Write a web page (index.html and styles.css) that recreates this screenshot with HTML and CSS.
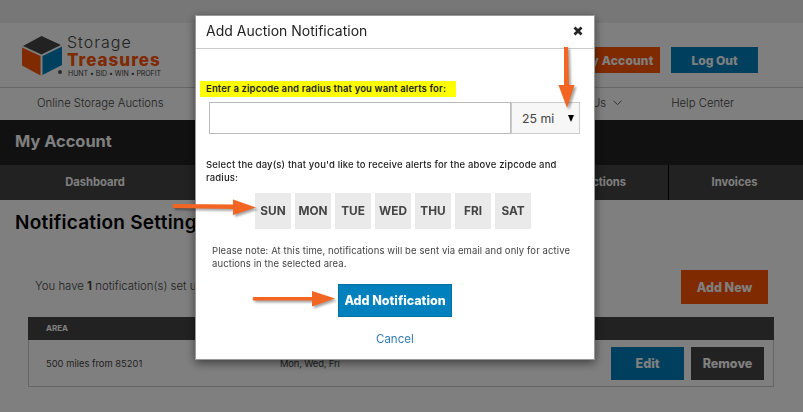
FILE: index.html
```
<!DOCTYPE html>
<html lang="en">
<head>
    <meta charset="UTF-8">
    <meta name="viewport" content="width=device-width, initial-scale=1.0">
    <title>Notification Settings - Storage Treasures</title>
    <link rel="stylesheet" href="styles.css">
</head>
<body>
    <div class="topbar"></div>

    <header class="header">
        <a class="logo" href="#">
            <svg class="logo-cube" width="42" height="42" viewBox="0 0 42 42">
                <path d="M20.5 1 40 10 20.5 19.500 2 11Z" fill="#444"/>
                <path d="M1 12.500 19.500 21V40.500L1 30.500Z" fill="#ff5400"/>
                <path d="M21.500 21 41 11.500V30L21.500 40Z" fill="#0081bd"/>
                <circle cx="39" cy="37" r="2" fill="#555"/>
            </svg>
            <span class="logo-text">
                <span class="logo-storage">Storage</span>
                <span class="logo-treasures">Treasures</span>
                <span class="logo-tagline">HUNT • BID • WIN • PROFIT</span>
            </span>
        </a>
        <div class="header-buttons">
            <a class="btn btn-orange btn-account" href="#">My Account</a>
            <a class="btn btn-blue btn-logout" href="#">Log Out</a>
        </div>
    </header>

    <nav class="main-nav">
        <a class="nav-auctions" href="#">Online Storage Auctions</a>
        <a class="nav-about" href="#">About Us
            <svg width="9" height="6" viewBox="0 0 9 6"><path d="M.5.7 4.500 4.700 8.500.7" fill="none" stroke="#666" stroke-width="1"/></svg>
        </a>
        <a class="nav-help" href="#">Help Center</a>
    </nav>

    <div class="account-bar">My Account</div>

    <nav class="tabs">
        <a class="tab tab-dashboard" href="#">Dashboard</a>
        <a class="tab tab-auctions" href="#">My Auctions</a>
        <a class="tab tab-invoices" href="#">Invoices</a>
    </nav>

    <main class="content">
        <h1>Notification Settings</h1>
        <div class="summary">
            <p>You have <b>1</b> notification(s) set up</p>
            <a class="btn btn-orange btn-new" href="#">Add New</a>
        </div>
        <div class="table">
            <div class="table-head">AREA</div>
            <div class="table-row">
                <span class="cell-area">500 miles from 85201</span>
                <span class="cell-days">Mon, Wed, Fri</span>
                <a class="btn btn-blue btn-row btn-edit" href="#">Edit</a>
                <a class="btn btn-dark btn-row btn-remove" href="#">Remove</a>
            </div>
        </div>
    </main>

    <div class="overlay">
        <div class="modal">
            <div class="modal-header">
                <h2>Add Auction Notification</h2>
                <svg class="close" width="10" height="10" viewBox="0 0 10 10"><path d="M1.500 1.500 8.500 8.500M8.500 1.500 1.500 8.500" stroke="#222" stroke-width="2.800"/></svg>
            </div>
            <div class="modal-body">
                <label class="zip-label" for="zipcode">Enter a zipcode and radius that you want alerts for:</label>
                <div class="zip-row">
                    <input type="text" id="zipcode" name="zipcode">
                    <div class="radius">
                        <span>25 mi</span>
                        <svg width="6" height="7" viewBox="0 0 6 7"><path d="M0 0H6L3 7Z" fill="#000"/></svg>
                    </div>
                </div>
                <p class="days-label"><span class="line">Select the day(s) that you'd like to receive alerts for the above zipcode and</span> <span>radius:</span></p>
                <div class="days">
                    <span class="day">SUN</span>
                    <span class="day">MON</span>
                    <span class="day">TUE</span>
                    <span class="day">WED</span>
                    <span class="day">THU</span>
                    <span class="day">FRI</span>
                    <span class="day">SAT</span>
                </div>
                <p class="note"><span class="line">Please note: At this time, notifications will be sent via email and only for active</span> <span>auctions in the selected area.</span></p>
                <a class="btn btn-blue btn-add" href="#">Add Notification</a>
                <a class="cancel" href="#">Cancel</a>
            </div>
        </div>
    </div>

    <!-- Callout arrows -->
    <svg class="arrows" width="803" height="412" viewBox="0 0 803 412">
        <g fill="#f26522">
            <path d="M564 47h4l1 38h5.500L567 108 558.500 85H564Z"/>
            <path d="M173.500 204 233 204.500V199.500L256 207.500 233 215V209L173.500 208Q171 206 173.500 204Z"/>
            <path d="M253.500 297H312V291L335 298.500 312 306.500V300.500H253.500Q251.500 298.800 253.500 297Z"/>
        </g>
    </svg>
</body>
</html>
```
FILE: styles.css
```
* {
    margin: 0;
    padding: 0;
    box-sizing: border-box;
}

body {
    font-family: Inter, "Open Sans", sans-serif;
    font-size: 11px;
    color: #444;
    background-color: white;
    height: 412px;
    overflow: hidden;
}

a {
    color: inherit;
    text-decoration: none;
}

.topbar {
    height: 23px;
    background-color: #eee;
}

.header {
    display: flex;
    justify-content: space-between;
    height: 65px;
    padding: 0 45px 0 21px;
    border-bottom: 1px solid #ccc;
}

.logo {
    display: flex;
    padding-top: 12px;
}

.logo-text {
    display: flex;
    flex-direction: column;
    margin: -1px 0 0 4px;
    white-space: nowrap;
}

.logo-storage {
    font-size: 16px;
    font-weight: 300;
    line-height: 17px;
    letter-spacing: 1px;
}

.logo-treasures {
    font-size: 17px;
    font-weight: 800;
    line-height: 18px;
    color: #ff5400;
    letter-spacing: 1px;
}

.logo-tagline {
    margin-left: 1px;
    font-size: 7px;
    line-height: 10px;
    letter-spacing: -0.05px;
}

.header-buttons {
    display: flex;
    gap: 11px;
    padding-top: 24px;
}

.btn {
    display: flex;
    align-items: center;
    justify-content: center;
    font-size: 12.500px;
    font-weight: 800;
    color: white;
    white-space: nowrap;
}

.btn-orange {
    background-color: #ff5400;
}

.btn-blue {
    background-color: #0081bd;
}

.btn-dark {
    background-color: #444;
}

.btn-account,
.btn-logout {
    width: 87px;
    height: 26px;
    font-size: 12px;
}

.btn-account {
    letter-spacing: 0.2px;
}

.main-nav {
    display: flex;
    align-items: center;
    height: 32px;
    padding: 0 69px 2px 37px;
    font-size: 11.300px;
    font-weight: 300;
    white-space: nowrap;
}

.nav-auctions {
    margin-right: auto;
}

.nav-about {
    display: flex;
    align-items: center;
    gap: 7px;
    margin-right: 49px;
}

.account-bar {
    height: 45px;
    padding-left: 15px;
    line-height: 43px;
    font-size: 16.400px;
    font-weight: 700;
    color: white;
    background-color: #222;
}

.tabs {
    display: flex;
    height: 35px;
    line-height: 35px;
    font-size: 11.200px;
    font-weight: 700;
    color: white;
    background-color: #444;
}

.tab {
    text-align: center;
}

.tab-dashboard {
    width: 190px;
    margin-right: auto;
}

.tab-auctions {
    padding-right: 42px;
    border-right: 1px solid black;
}

.tab-invoices {
    width: 134px;
    padding-right: 3px;
}

.content h1 {
    margin: 9px 0 0 15px;
    font-size: 19px;
    font-weight: 600;
    line-height: 28px;
    letter-spacing: 0.25px;
    color: black;
}

.summary {
    display: flex;
    justify-content: space-between;
    margin-top: 33px;
    padding: 0 35px;
}

.summary p {
    line-height: 32px;
    font-size: 11.400px;
    font-weight: 300;
}

.summary b {
    font-weight: 700;
}

.btn-new {
    width: 87px;
    height: 34px;
}

.table {
    margin: 13px 29px 0 28px;
}

.table-head {
    height: 23px;
    padding-left: 18px;
    line-height: 23px;
    font-size: 8px;
    font-weight: 700;
    color: white;
    background-color: #444;
}

.table-row {
    display: flex;
    align-items: center;
    height: 47px;
    padding: 0 9px 0 17px;
    border: 1px solid #ccc;
    border-top: 0;
    font-size: 9.400px;
}

.cell-area {
    width: 234px;
}

.cell-days {
    margin-right: auto;
    letter-spacing: -0.15px;
}

.btn-row {
    width: 73px;
    height: 33px;
    margin-left: 7px;
}

.overlay {
    position: fixed;
    inset: 0;
    padding: 15px 0 0 195px;
    background-color: rgba(0, 0, 0, 0.5);
}

.modal {
    width: 400px;
    height: 345px;
    border: 1px solid #999;
    background-color: white;
    box-shadow: 0 3px 9px rgba(0, 0, 0, 0.5);
}

.modal-header {
    display: flex;
    align-items: center;
    justify-content: space-between;
    height: 33px;
    padding: 0 11px 3px 10px;
    border-bottom: 1px solid #ccc;
}

.modal-header h2 {
    font-size: 14px;
    font-weight: 400;
    color: #222;
}

.modal-body {
    display: flex;
    flex-direction: column;
    padding: 32px 14px 0 4px;
}

.zip-label {
    width: 256px;
    height: 16px;
    padding-left: 6px;
    line-height: 16px;
    font-size: 9.500px;
    font-weight: 600;
    letter-spacing: 0.13px;
    color: #222;
    background-color: #ff0;
    white-space: nowrap;
}

.zip-row {
    display: flex;
    height: 32px;
    margin: 5px 0 0 9px;
}

.zip-row input {
    width: 302px;
    border: 1px solid #bbb;
}

.radius {
    display: flex;
    flex: 1;
    align-items: center;
    justify-content: space-between;
    padding: 0 5px 0 10px;
    border: 1px solid #ccc;
    font-size: 12.300px;
    background-color: #f7f7f7;
}

.days-label {
    margin: 24px 0 0 6px;
    font-size: 9.500px;
    font-weight: 500;
    line-height: 13px;
    letter-spacing: 0.15px;
    color: #222;
}

.line {
    display: block;
    white-space: nowrap;
}

.days {
    display: flex;
    gap: 4px;
    margin: 9px 0 0 55px;
}

.day {
    width: 36px;
    height: 36px;
    line-height: 36px;
    font-size: 11.800px;
    font-weight: 700;
    text-align: center;
    background-color: #eaeaea;
}

.note {
    margin: 15px 0 0 12px;
    font-size: 9.500px;
    line-height: 13px;
    letter-spacing: 0.1px;
}

.btn-add {
    width: 114px;
    height: 33px;
    margin: 14px 0 0 138px;
    border: 1px solid #0070a4;
}

.cancel {
    margin: 14px 0 0 176px;
    font-size: 11.500px;
    line-height: 16px;
    color: #337ab7;
}

.arrows {
    position: fixed;
    top: 0;
    left: 0;
    filter: drop-shadow(2px 2px 1px rgba(0, 0, 0, 0.35));
}
```
